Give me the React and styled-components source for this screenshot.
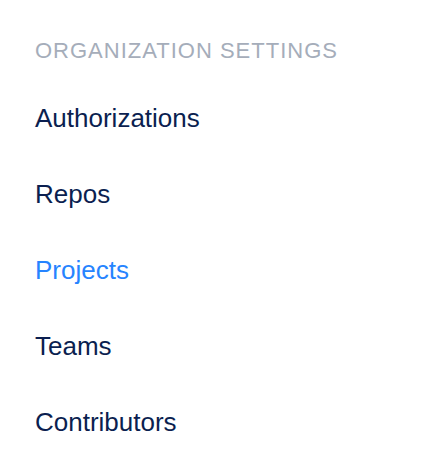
import React from "react";
import styled, { createGlobalStyle } from "styled-components";

const Global = createGlobalStyle`
  html, body { margin: 0; padding: 0; background: #ffffff; }
  body { font-family: "Liberation Sans", Arial, Helvetica, sans-serif; }
`;

const Nav = styled.nav`
  display: flex;
  flex-direction: column;
  padding: 39px 0 0 35px;
`;

const Heading = styled.h2`
  margin: 0 0 17px 0;
  font-family: "Liberation Sans", Arial, sans-serif;
  font-size: 22px;
  line-height: 24px;
  font-weight: 400;
  letter-spacing: 1px;
  color: #a5adba;
  text-transform: uppercase;
`;

const List = styled.ul`
  list-style: none;
  margin: 0;
  padding: 0;
  display: flex;
  flex-direction: column;
`;

const Item = styled.li`
  font-family: "Liberation Sans", Arial, sans-serif;
  font-size: 26px;
  line-height: 76px;
  height: 76px;
  color: ${(p) => (p.$active ? "#2684ff" : "#0b1f50")};
  cursor: pointer;
`;

const items = ["Authorizations", "Repos", "Projects", "Teams", "Contributors"];

export default function App() {
  return (
    <>
      <Global />
      <Nav>
        <Heading>Organization Settings</Heading>
        <List>
          {items.map((t) => (
            <Item key={t} $active={t === "Projects"}>
              {t}
            </Item>
          ))}
        </List>
      </Nav>
    </>
  );
}
